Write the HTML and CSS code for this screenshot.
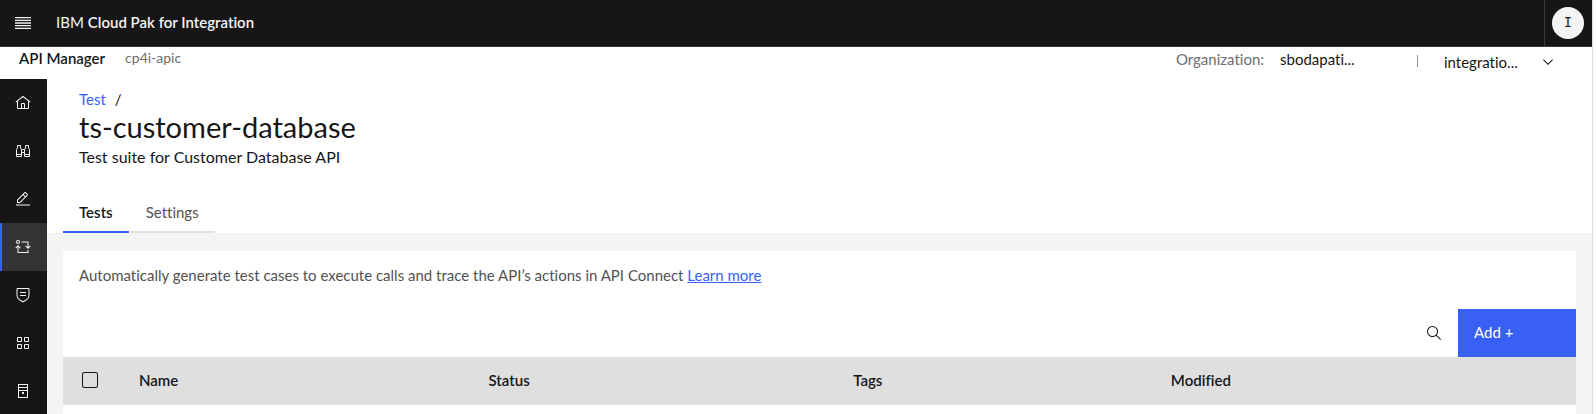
FILE: index.html
```html
<!DOCTYPE html>
<html lang="en">
<head>
<meta charset="utf-8">
<title>IBM Cloud Pak for Integration</title>
<link rel="stylesheet" href="styles.css">
</head>
<body>
<div class="shell">
  <header class="topbar">
    <button class="menu-button" type="button" aria-label="Open menu">
      <svg width="16" height="12" viewBox="0 0 16 12" fill="#f4f4f4"><path d="M0 0h16v1.300H0zM0 2.650h16v1.350H0zM0 5.300h16v1.400H0zM0 8h16v1.350H0zM0 10.700h16v1.300H0z"/></svg>
    </button>
    <a class="brand" href="#">IBM <b>Cloud Pak for Integration</b></a>
    <div class="account"><button class="avatar" type="button">I</button></div>
  </header>

  <div class="subbar">
    <strong class="product">API Manager</strong>
    <span class="instance">cp4i-apic</span>
    <div class="org">
      <span class="org-label">Organization:</span>
      <span class="org-name">sbodapati...</span>
    </div>
    <span class="divider"></span>
    <div class="user-menu">
      <select class="user-select" aria-label="User"><option>integratio...</option></select>
      <svg class="chevron" width="16" height="16" viewBox="0 0 16 16" fill="#161616"><path d="M8 11 3 6l.7-.7L8 9.600l4.300-4.300.7.7z"/></svg>
    </div>
  </div>

  <div class="body">
    <nav class="sidebar" aria-label="Main">
      <a class="nav-item" href="#" aria-label="Home"><svg class="icon" viewBox="0 0 32 32"><path d="M16.612 2.214a1.010 1.010 0 0 0-1.242 0L1 13.419l1.243 1.572L4 13.621V26a2.004 2.004 0 0 0 2 2h20a2.004 2.004 0 0 0 2-2V13.630l1.757 1.370L31 13.428ZM18 26h-4v-8h4Zm2 0v-8a2.002 2.002 0 0 0-2-2h-4a2.002 2.002 0 0 0-2 2v8H6V12.062l10-7.790 10 7.800V26Z"/></svg></a>
      <a class="nav-item" href="#" aria-label="Discover"><svg class="icon icon-line" viewBox="0 0 16 16"><path d="M2.500 2.500h3v2.500l1 1.500v7h-5v-7l1-1.500zM10.500 2.500h3v2.500l1 1.500v7h-5v-7l1-1.500zM1.500 11.500h5M9.500 11.500h5M6.500 6.500h3M6.500 9.500h3"/></svg></a>
      <a class="nav-item" href="#" aria-label="Develop"><svg class="icon" viewBox="0 0 32 32"><path d="M2 27h28v2H2zM25.400 9c.8-.8.8-2 0-2.800l-3.600-3.600c-.8-.8-2-.8-2.800 0l-15 15V24h6.400zm-5-5L24 7.600l-3 3L17.400 7zM6 22v-3.600l10-10 3.600 3.600-10 10z"/></svg></a>
      <a class="nav-item nav-item-active" href="#" aria-label="Test" aria-current="page"><svg class="icon" viewBox="0 0 32 32"><path d="M6 2a4 4 0 1 0 0 8 4 4 0 0 0 0-8Zm0 2a2 2 0 1 1 0 4 2 2 0 0 1 0-4ZM13 5h14v11l3-3 1.400 1.400L26 20l-5.400-5.600L22 13l3 3V7H13zM6 12l5.400 5.400L10 18.800l-3-3V26h18v-4h2v6H5V15.800l-3 3-1.400-1.400z"/></svg></a>
      <a class="nav-item" href="#" aria-label="Catalogs"><svg class="icon" viewBox="0 0 32 32"><path d="M10 16h12v2H10zM10 10h12v2H10z"/><path d="m16 31-7-4a12 12 0 0 1-6-10V4a2 2 0 0 1 2-2h22a2 2 0 0 1 2 2v13a12 12 0 0 1-6 10ZM5 4v13c0 3 2 6 5 8l6 3.500 6-3.500c3-2 5-5 5-8V4Z"/></svg></a>
      <a class="nav-item" href="#" aria-label="Apps"><svg class="icon" viewBox="0 0 32 32"><path d="M12 4H6a2 2 0 0 0-2 2v6a2 2 0 0 0 2 2h6a2 2 0 0 0 2-2V6a2 2 0 0 0-2-2Zm0 8H6V6h6ZM26 4h-6a2 2 0 0 0-2 2v6a2 2 0 0 0 2 2h6a2 2 0 0 0 2-2V6a2 2 0 0 0-2-2Zm0 8h-6V6h6ZM12 18H6a2 2 0 0 0-2 2v6a2 2 0 0 0 2 2h6a2 2 0 0 0 2-2v-6a2 2 0 0 0-2-2Zm0 8H6v-6h6ZM26 18h-6a2 2 0 0 0-2 2v6a2 2 0 0 0 2 2h6a2 2 0 0 0 2-2v-6a2 2 0 0 0-2-2Zm0 8h-6v-6h6Z"/></svg></a>
      <a class="nav-item" href="#" aria-label="Resources"><svg class="icon" viewBox="0 0 32 32"><path d="M6 2v28h20V2Zm2 2h16v4H8Zm0 6h16v4H8Zm0 6h16v12H8Z"/><path d="M14 18h4v4h-4z"/></svg></a>
    </nav>

    <main class="main">
      <section class="page-head">
        <nav class="crumbs" aria-label="Breadcrumb"><a href="#">Test</a><span>/</span></nav>
        <h1 class="title">ts-customer-database</h1>
        <p class="subtitle">Test suite for Customer Database API</p>
        <div class="tabs" role="tablist">
          <button class="tab tab-active" type="button" role="tab" aria-selected="true">Tests</button>
          <button class="tab" type="button" role="tab" aria-selected="false">Settings</button>
        </div>
      </section>
      <section class="card">
        <p class="intro">Automatically generate test cases to execute calls and trace the API’s actions in API Connect <a href="#">Learn more</a></p>
        <div class="toolbar">
          <button class="search" type="button" aria-label="Search"><svg width="16" height="16" viewBox="0 0 32 32" fill="#161616"><path d="m30 28.590-8.490-8.490A11.020 11.020 0 1 0 20.100 21.500L28.590 30ZM4 13a9 9 0 1 1 9 9 9 9 0 0 1-9-9Z"/></svg></button>
          <button class="add" type="button">Add +</button>
        </div>
        <table class="table">
          <thead>
            <tr>
              <th class="col-check"><input class="check" type="checkbox" aria-label="Select all rows"></th>
              <th class="col-name">Name</th>
              <th class="col-status">Status</th>
              <th class="col-tags">Tags</th>
              <th>Modified</th>
            </tr>
          </thead>
        </table>
      </section>
    </main>
  </div>
</div>
</body>
</html>
```
FILE: styles.css
```css
* { box-sizing: border-box; }
body {
  margin: 0;
  height: 100vh;
  overflow: hidden;
  padding-right: 3px;
  background: #fafafa;
  color: #161616;
  font: 15px/20px Lato, "Noto Sans", sans-serif;
  font-variant-ligatures: none;
}
button, select { font: inherit; font-variant-ligatures: none; border: 0; padding: 0; margin: 0; background: none; color: inherit; cursor: pointer; }
a { color: #3660f5; }
h1, p { margin: 0; font-weight: 400; }
svg { display: block; }

.shell { display: flex; flex-direction: column; height: 100%; background: #fff; border-right: 1px solid #e0e0e0; }

.topbar { display: flex; align-items: stretch; flex: none; height: 47px; background: #161616; border-bottom: 1px solid #393939; }
.menu-button { display: grid; place-items: center; width: 46px; }
.brand { display: flex; align-items: center; gap: 4px; padding: 0 0 2px 10px; color: #f4f4f4; text-decoration: none; }
.brand b { font-weight: 600; }
.account { display: flex; align-items: center; margin-left: auto; padding: 0 8px 0 7px; border-left: 1px solid #393939; }
.avatar { width: 32px; height: 32px; border-radius: 50%; background: #f4f4f4; font-family: "Liberation Mono", monospace; font-size: 14px; }

.subbar { display: flex; align-items: flex-start; flex: none; height: 32px; padding: 1px 36px 0 19px; }
.product { font-weight: 600; }
.instance { margin-left: 20px; color: #6f6f6f; font-size: 14px; }
.org { display: flex; gap: 16px; margin-left: auto; padding-top: 1px; }
.org-label { color: #6f6f6f; }
.org-name { width: 137px; }
.divider { width: 1px; height: 12px; margin-top: 7px; background: #8d8d8d; }
.user-menu { display: grid; align-items: center; width: 112px; margin-left: 26px; padding-top: 4px; }
.user-select { grid-area: 1 / 1; width: 100%; height: 20px; appearance: none; }
.chevron { grid-area: 1 / 1; justify-self: end; pointer-events: none; }

.body { display: flex; flex: 1; min-height: 0; }
.sidebar { flex: none; width: 47px; overflow: hidden; background: #161616; }
.nav-item { display: grid; place-items: center; height: 48px; border-left: 2px solid transparent; padding-right: 3px; }
.nav-item-active { background: #333; border-left-color: #3660f5; }
.icon { width: 16px; height: 16px; fill: #f4f4f4; }
.icon-line { fill: none; stroke: #f4f4f4; }

.main { display: flex; flex-direction: column; flex: 1; min-width: 0; background: #f4f4f4; }
.page-head { padding: 10px 16px 0; background: #fff; }
.crumbs { display: flex; gap: 9px; padding-left: 16px; }
.crumbs a { text-decoration: none; }
.title { padding-left: 16px; font-size: 29px; line-height: 36px; }
.subtitle { padding-left: 16px; font-size: 16px; line-height: 24px; }
.tabs { display: flex; gap: 1px; margin-top: 24px; }
.tab { height: 40px; padding: 0 16px; border-bottom: 2px solid #e0e0e0; color: #525252; }
.tab-active { border-bottom-color: #3660f5; color: #161616; font-weight: 600; }

.card { flex: 1; margin: 18px 16px 0; background: #fff; }
.intro { padding: 14px 16px 24px; color: #525252; }
.toolbar { display: flex; justify-content: flex-end; height: 48px; }
.search { display: grid; place-items: center; width: 48px; }
.add { width: 118px; padding: 0 0 2px 16px; background: #3860f5; color: #fff; text-align: left; }

.table { width: 100%; table-layout: fixed; border-collapse: collapse; background: #dfdfdf; }
.table th { height: 48px; padding: 0 16px 2px; font-weight: 600; text-align: left; }
.table .col-check { width: 60px; padding: 0 0 2px 19px; }
.col-name { width: 23.1%; }
.col-status { width: 24.1%; }
.col-tags { width: 21%; }
.check { display: block; width: 16px; height: 16px; margin: 0; appearance: none; border: 1px solid #161616; border-radius: 2px; }
```
